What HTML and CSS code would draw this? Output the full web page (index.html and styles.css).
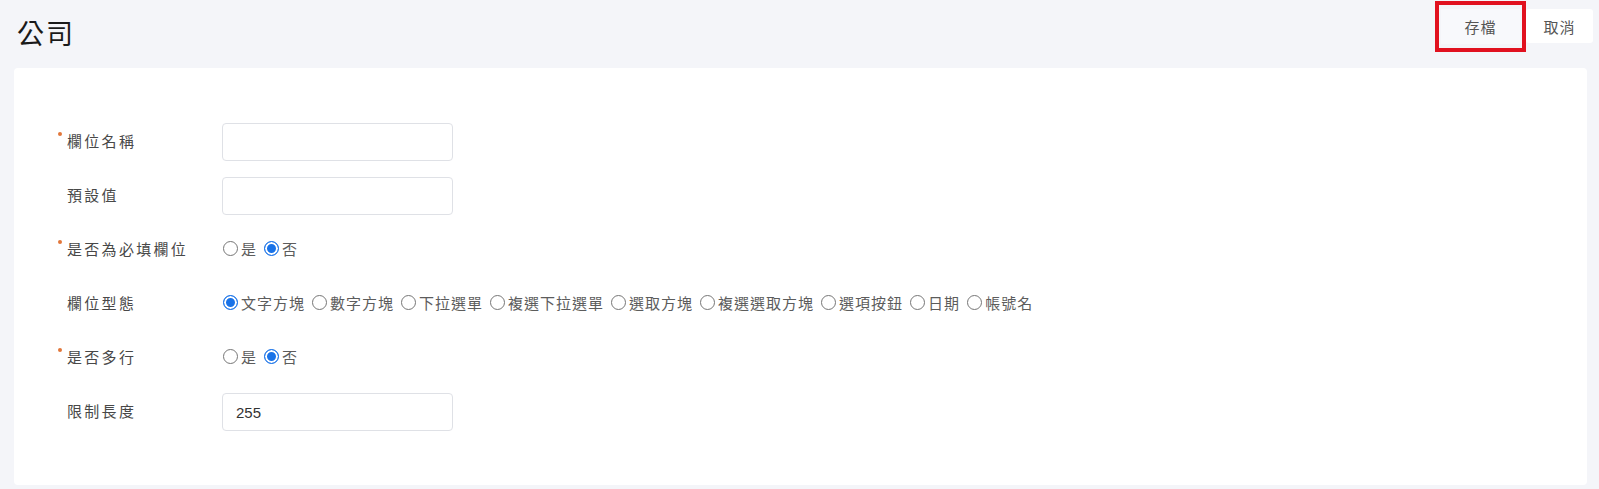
FILE: index.html
```html
<!DOCTYPE html>
<html>

<head>
    <meta charset="UTF-8">
    <title>公司</title>
    <link rel="stylesheet" href="styles.css">
</head>

<body>
    <div class="header">
        <h1 class="title">公司</h1>
        <div class="actions">
            <div class="save-mark">
                <button class="btn btn-save" type="button">存檔</button>
            </div>
            <button class="btn btn-cancel" type="button">取消</button>
        </div>
    </div>

    <form class="card">
        <div class="row">
            <label class="label"><i class="req"></i>欄位名稱</label>
            <input class="field" type="text">
        </div>

        <div class="row">
            <label class="label"><i class="req off"></i>預設值</label>
            <input class="field" type="text">
        </div>

        <div class="row">
            <label class="label"><i class="req"></i>是否為必填欄位</label>
            <div class="radios">
                <label class="opt"><input type="radio" name="must">是</label>
                <label class="opt"><input type="radio" name="must" checked>否</label>
            </div>
        </div>

        <div class="row">
            <label class="label"><i class="req off"></i>欄位型態</label>
            <div class="radios">
                <label class="opt"><input type="radio" name="kind" checked>文字方塊</label>
                <label class="opt"><input type="radio" name="kind">數字方塊</label>
                <label class="opt"><input type="radio" name="kind">下拉選單</label>
                <label class="opt"><input type="radio" name="kind">複選下拉選單</label>
                <label class="opt"><input type="radio" name="kind">選取方塊</label>
                <label class="opt"><input type="radio" name="kind">複選選取方塊</label>
                <label class="opt"><input type="radio" name="kind">選項按鈕</label>
                <label class="opt"><input type="radio" name="kind">日期</label>
                <label class="opt"><input type="radio" name="kind">帳號名</label>
            </div>
        </div>

        <div class="row">
            <label class="label"><i class="req"></i>是否多行</label>
            <div class="radios">
                <label class="opt"><input type="radio" name="multi">是</label>
                <label class="opt"><input type="radio" name="multi" checked>否</label>
            </div>
        </div>

        <div class="row">
            <label class="label"><i class="req off"></i>限制長度</label>
            <input class="field" type="text" value="255">
        </div>
    </form>
</body>

</html>
```

FILE: styles.css
```css
* {
    box-sizing: border-box;
    font-family: "Noto Sans CJK TC", "Noto Sans", sans-serif;
}

body {
    margin: 0;
    background: #f4f5f9;
    color: #444;
}

.header {
    display: flex;
    justify-content: space-between;
    align-items: flex-start;
    height: 68px;
    padding: 0 6px 0 17px;
}

.title {
    margin: 15px 0 0;
    font-size: 27px;
    font-weight: 400;
    line-height: 36px;
    letter-spacing: 2px;
    color: #1a1a1a;
}

.actions {
    display: flex;
    align-items: flex-start;
    margin-top: 1px;
}

.save-mark {
    width: 91px;
    height: 51px;
    border: 4px solid #e1111f;
    padding: 4px 2px;
}

.btn {
    border: none;
    font-size: 15px;
    color: #555;
    letter-spacing: 1px;
    cursor: pointer;
}

.btn-save {
    width: 100%;
    height: 100%;
    background: #f8f9fc;
}

.btn-cancel {
    width: 67px;
    height: 34px;
    margin-top: 8px;
    background: #fff;
    border-radius: 3px;
}

.card {
    margin: 0 12px 0 14px;
    height: 417px;
    background: #fff;
    border-radius: 4px;
    padding: 55px 0 0 44px;
    display: flex;
    flex-direction: column;
    gap: 16px;
}

.row {
    display: grid;
    grid-template-columns: 164px 1fr;
    align-items: center;
    height: 38px;
}

.label {
    display: flex;
    align-items: flex-start;
    padding-bottom: 4px;
    font-size: 15px;
    letter-spacing: 2.3px;
    color: #484848;
}

.req {
    width: 4px;
    height: 4px;
    margin: 2px 5px 0 0;
    border-radius: 50%;
    background: #e2773a;
}

.req.off {
    background: transparent;
}

.field {
    width: 231px;
    height: 38px;
    border: 1px solid #dfe1e6;
    border-radius: 4px;
    padding: 0 13px;
    font-family: "Liberation Sans", sans-serif;
    font-size: 15px;
    color: #333;
    outline: none;
}

.radios {
    display: flex;
    align-items: center;
    padding: 0 0 4px 1px;
}

.opt {
    display: flex;
    align-items: center;
    margin-right: 7px;
    font-size: 15px;
    letter-spacing: 1px;
    color: #5c5c5c;
}

.opt input {
    appearance: none;
    width: 15px;
    height: 15px;
    margin: 1px 3px 0 0;
    border: 1px solid #767676;
    border-radius: 50%;
    background: #fff;
}

.opt input:checked {
    border: 1.5px solid #1a73e8;
    background: #1a73e8;
    box-shadow: inset 0 0 0 2px #fff;
}
```
